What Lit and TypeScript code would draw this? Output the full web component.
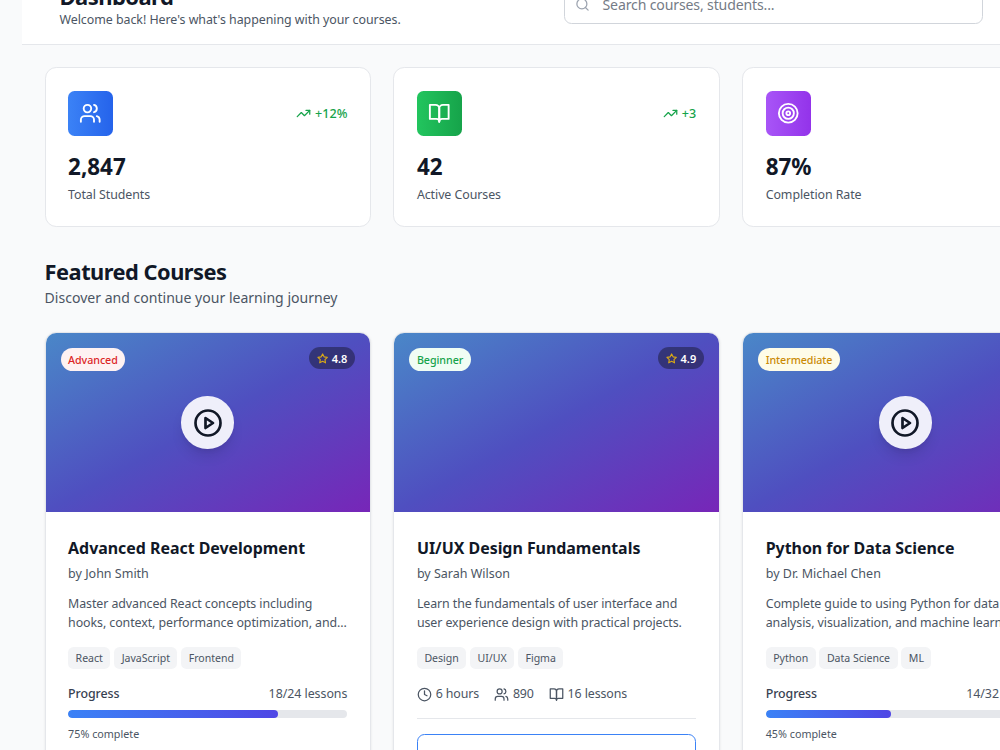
import { LitElement, html, css, svg, nothing } from "lit";
import { customElement, property } from "lit/decorators.js";

const ICONS: Record<string, unknown> = {
  users: svg`<path d="M16 21v-2a4 4 0 0 0-4-4H6a4 4 0 0 0-4 4v2"/><circle cx="9" cy="7" r="4"/><path d="M22 21v-2a4 4 0 0 0-3-3.87"/><path d="M16 3.13a4 4 0 0 1 0 7.75"/>`,
  book: svg`<path d="M2 3h6a4 4 0 0 1 4 4v14a3 3 0 0 0-3-3H2z"/><path d="M22 3h-6a4 4 0 0 0-4 4v14a3 3 0 0 1 3-3h7z"/>`,
  target: svg`<circle cx="12" cy="12" r="10"/><circle cx="12" cy="12" r="6"/><circle cx="12" cy="12" r="2"/>`,
  trend: svg`<polyline points="22 7 13.5 15.5 8.5 10.5 2 17"/><polyline points="16 7 22 7 22 13"/>`,
  search: svg`<circle cx="11" cy="11" r="8"/><path d="m21 21-4.3-4.3"/>`,
  star: svg`<polygon points="12 2 15.09 8.26 22 9.27 17 14.14 18.18 21.02 12 17.77 5.82 21.02 7 14.14 2 9.27 8.91 8.26 12 2"/>`,
  play: svg`<circle cx="12" cy="12" r="10"/><polygon points="10 8 16 12 10 16 10 8"/>`,
  clock: svg`<circle cx="12" cy="12" r="10"/><polyline points="12 6 12 12 16 14"/>`,
};

@customElement("line-icon")
export class LineIcon extends LitElement {
  @property() name = "";

  static styles = css`
    :host { display: block; flex: none; stroke-width: 2; }
    svg { display: block; width: 100%; height: 100%; }
  `;

  render() {
    return html`<svg viewBox="0 0 24 24" fill="none" stroke="currentColor"
      stroke-linecap="round" stroke-linejoin="round">${ICONS[this.name]}</svg>`;
  }
}

interface Stat { icon: string; tone: string; value: string; label: string; trend: string; }

const STATS: Stat[] = [
  { icon: "users", tone: "blue", value: "2,847", label: "Total Students", trend: "+12%" },
  { icon: "book", tone: "green", value: "42", label: "Active Courses", trend: "+3" },
  { icon: "target", tone: "purple", value: "87%", label: "Completion Rate", trend: "+5%" },
];

interface Course {
  level: string; rating: string; title: string; author: string; text: string[]; tags: string[];
  progress?: { percent: number; lessons: string };
  meta?: { icon: string; text: string }[];
}

const COURSES: Course[] = [
  {
    level: "Advanced", rating: "4.8", title: "Advanced React Development", author: "by John Smith",
    text: ["Master advanced React concepts including", "hooks, context, performance optimization, and..."],
    tags: ["React", "JavaScript", "Frontend"],
    progress: { percent: 75, lessons: "18/24 lessons" },
  },
  {
    level: "Beginner", rating: "4.9", title: "UI/UX Design Fundamentals", author: "by Sarah Wilson",
    text: ["Learn the fundamentals of user interface and", "user experience design with practical projects."],
    tags: ["Design", "UI/UX", "Figma"],
    meta: [{ icon: "clock", text: "6 hours" }, { icon: "users", text: "890" }, { icon: "book", text: "16 lessons" }],
  },
  {
    level: "Intermediate", rating: "4.7", title: "Python for Data Science", author: "by Dr. Michael Chen",
    text: ["Complete guide to using Python for data", "analysis, visualization, and machine learning."],
    tags: ["Python", "Data Science", "ML"],
    progress: { percent: 45, lessons: "14/32 lessons" },
  },
];

@customElement("stat-card")
export class StatCard extends LitElement {
  @property({ attribute: false }) stat!: Stat;

  static styles = css`
    :host { display: block; box-sizing: border-box; padding: 22.5px; background: #fff; border: 1px solid #e5e7eb; border-radius: 11.25px; }
    .top { display: flex; align-items: center; justify-content: space-between; margin-bottom: 16.6px; }
    .tile { width: 45px; height: 45px; display: grid; place-items: center; border-radius: 6.5px; color: #fff; }
    .tile line-icon { width: 22.5px; height: 22.5px; }
    .blue { background: linear-gradient(to right, #3b82f6, #2563eb); }
    .green { background: linear-gradient(to right, #22c55e, #16a34a); }
    .purple { background: linear-gradient(to right, #a855f7, #9333ea); }
    .trend { display: flex; align-items: center; gap: 3.75px; color: #16a34a; font-size: 12.6px; font-weight: 550; line-height: 18.75px; }
    .trend line-icon { width: 15px; height: 15px; }
    .trend span { padding-top: 2px; }
    .value { font-size: 22.4px; font-weight: 700; line-height: 30px; color: #111827; }
    .label { margin-top: 3.45px; font-size: 12.4px; letter-spacing: -.07px; line-height: 18.75px; color: #4b5563; margin-bottom: -1.3px; }
  `;

  render() {
    const s = this.stat;
    return html`
      <div class="top">
        <div class="tile ${s.tone}"><line-icon name=${s.icon}></line-icon></div>
        <div class="trend"><line-icon name="trend"></line-icon><span>${s.trend}</span></div>
      </div>
      <div class="value">${s.value}</div>
      <div class="label">${s.label}</div>`;
  }
}

@customElement("course-card")
export class CourseCard extends LitElement {
  @property({ attribute: false }) course!: Course;

  static styles = css`
    :host { display: block; box-sizing: border-box; background: #fff; border: 1px solid #e5e7eb; border-radius: 11.25px; overflow: hidden; box-shadow: 0 1px 3px rgba(0, 0, 0, .08); white-space: nowrap; }
    .cover { box-sizing: border-box; height: 179.4px; position: relative; display: grid; place-items: center; background: linear-gradient(to bottom right, #4a87c8, #4f4fc0 50%, #7726b8); }
    .badge { position: absolute; left: 15px; top: 15px; height: 23.5px; padding: 0 7.5px; border-radius: 12px; font-size: 10.7px; letter-spacing: -.05px; font-weight: 550; line-height: 25px; }
    .advanced { background: #fef2f2; color: #dc2626; }
    .beginner { background: #f0fdf4; color: #16a34a; }
    .intermediate { background: #fefce8; color: #ca8a04; }
    .rating { position: absolute; right: 15px; top: 14.6px; height: 22px; padding: 0 7.5px; display: flex; align-items: center; gap: 3.75px; border-radius: 11px; background: rgba(30, 30, 60, .55); color: #fff; font-size: 11px; font-weight: 600; line-height: 22px; }
    .rating line-icon { width: 11.25px; height: 11.25px; color: #d9a916; stroke-width: 2.4; }
    .rating span { padding-top: 1px; }
    .play { width: 52.5px; height: 52.5px; display: grid; place-items: center; border-radius: 50%; background: #efeffa; color: #111827; box-shadow: 0 9px 14px -3px rgba(0, 0, 0, .12), 0 4px 6px -4px rgba(0, 0, 0, .1); }
    .play line-icon { width: 30px; height: 30px; stroke-width: 2.15; }
    .body { padding: 22.5px 22.5px 22.5px; }
    .title { font-size: 15.95px; letter-spacing: -.02px; font-weight: 700; line-height: 26.25px; color: #111827; }
    .author { margin-top: 3.75px; font-size: 12.5px; line-height: 18.75px; color: #4b5563; }
    .text { margin-top: 10.2px; font-size: 12.4px; letter-spacing: -.08px; line-height: 19px; color: #4b5563; }
    .tags { display: flex; gap: 3.75px; margin-top: 15.6px; }
    .tag { height: 21.75px; padding: 0 7.5px; border-radius: 5.6px; background: #f3f4f6; color: #4b5563; font-size: 10.55px; line-height: 23px; }
    .row { display: flex; justify-content: space-between; margin-top: 15.6px; font-size: 12.4px; letter-spacing: -.04px; line-height: 18.75px; color: #4b5563; }
    .name { font-weight: 550; letter-spacing: -.08px; color: #374151; }
    .track { margin-top: 7.1px; height: 7.5px; border-radius: 4px; background: #e5e7eb; overflow: hidden; }
    .fill { height: 100%; border-radius: 4px; background: linear-gradient(to right, #3b82f6, #4f46e5); }
    .done { margin-top: 8.9px; font-size: 10.75px; line-height: 15px; color: #4b5563; }
    .meta { display: flex; gap: 15px; margin-top: 15.6px; font-size: 12.4px; letter-spacing: -.1px; line-height: 18.75px; color: #4b5563; }
    .item { display: flex; align-items: center; gap: 3.75px; }
    .item line-icon { width: 15px; height: 15px; }
    .actions { margin-top: 14.2px; padding-top: 15px; border-top: 1px solid #e5e7eb; }
    .action { box-sizing: border-box; height: 40px; border: 1px solid #3b82f6; border-radius: 7.5px; background: #fff; }
  `;

  render() {
    const c = this.course;
    return html`
      <div class="cover">
        <div class="badge ${c.level.toLowerCase()}">${c.level}</div>
        <div class="rating"><line-icon name="star"></line-icon><span>${c.rating}</span></div>
        ${c.progress ? html`<div class="play"><line-icon name="play"></line-icon></div>` : nothing}
      </div>
      <div class="body">
        <div class="title">${c.title}</div>
        <div class="author">${c.author}</div>
        <div class="text">${c.text.map((line) => html`<div>${line}</div>`)}</div>
        <div class="tags">${c.tags.map((tag) => html`<span class="tag">${tag}</span>`)}</div>
        ${c.progress
          ? html`
              <div class="row"><span class="name">Progress</span><span>${c.progress.lessons}</span></div>
              <div class="track"><div class="fill" style="width:${c.progress.percent}%"></div></div>
              <div class="done">${c.progress.percent}% complete</div>`
          : html`
              <div class="meta">${c.meta?.map((m) => html`<div class="item"><line-icon name=${m.icon}></line-icon><span>${m.text}</span></div>`)}</div>
              <div class="actions"><div class="action"></div></div>`}
      </div>`;
  }
}

@customElement("app-root")
export class AppRoot extends LitElement {
  static styles = css`
    :host { display: block; width: 1000px; height: 750px; overflow: hidden; background: #f9fafb; font-family: "Noto Sans", "Open Sans", sans-serif; }
    .header { box-sizing: border-box; height: 45px; margin-left: 22px; padding: 0 17px 14px 37.5px; display: flex; align-items: flex-end; justify-content: space-between; background: #fff; border-bottom: 1px solid #e5e7eb; }
    .heading { margin-bottom: .5px; font-size: 22px; letter-spacing: -.55px; font-weight: 700; line-height: 30px; color: #111827; }
    .welcome { font-size: 12.4px; letter-spacing: -.035px; line-height: 18.75px; color: #4b5563; }
    .search { box-sizing: border-box; width: 419.5px; height: 39px; margin-bottom: 6.5px; padding-left: 10px; display: flex; align-items: center; gap: 13px; border: 1px solid #d1d5db; border-radius: 7.5px; color: #757b86; font-size: 14.1px; letter-spacing: -.15px; }
    .search line-icon { width: 15px; height: 15px; color: #9ca3af; }
    .content { padding: 22.1px 0 0 44.6px; }
    .grid { display: grid; grid-template-columns: repeat(3, 326.3px); gap: 22.5px; }
    .section { margin: 30.6px 0 22.2px; }
    .section-title { font-size: 21.8px; letter-spacing: -.5px; font-weight: 700; line-height: 30px; color: #111827; }
    .section-text { font-size: 14.05px; line-height: 22.5px; color: #4b5563; }
  `;

  render() {
    return html`
      <div class="header">
        <div>
          <div class="heading">Dashboard</div>
          <div class="welcome">Welcome back! Here's what's happening with your courses.</div>
        </div>
        <div class="search"><line-icon name="search"></line-icon><span>Search courses, students...</span></div>
      </div>
      <div class="content">
        <div class="grid">${STATS.map((s) => html`<stat-card .stat=${s}></stat-card>`)}</div>
        <div class="section">
          <div class="section-title">Featured Courses</div>
          <div class="section-text">Discover and continue your learning journey</div>
        </div>
        <div class="grid">${COURSES.map((c) => html`<course-card .course=${c}></course-card>`)}</div>
      </div>`;
  }
}
